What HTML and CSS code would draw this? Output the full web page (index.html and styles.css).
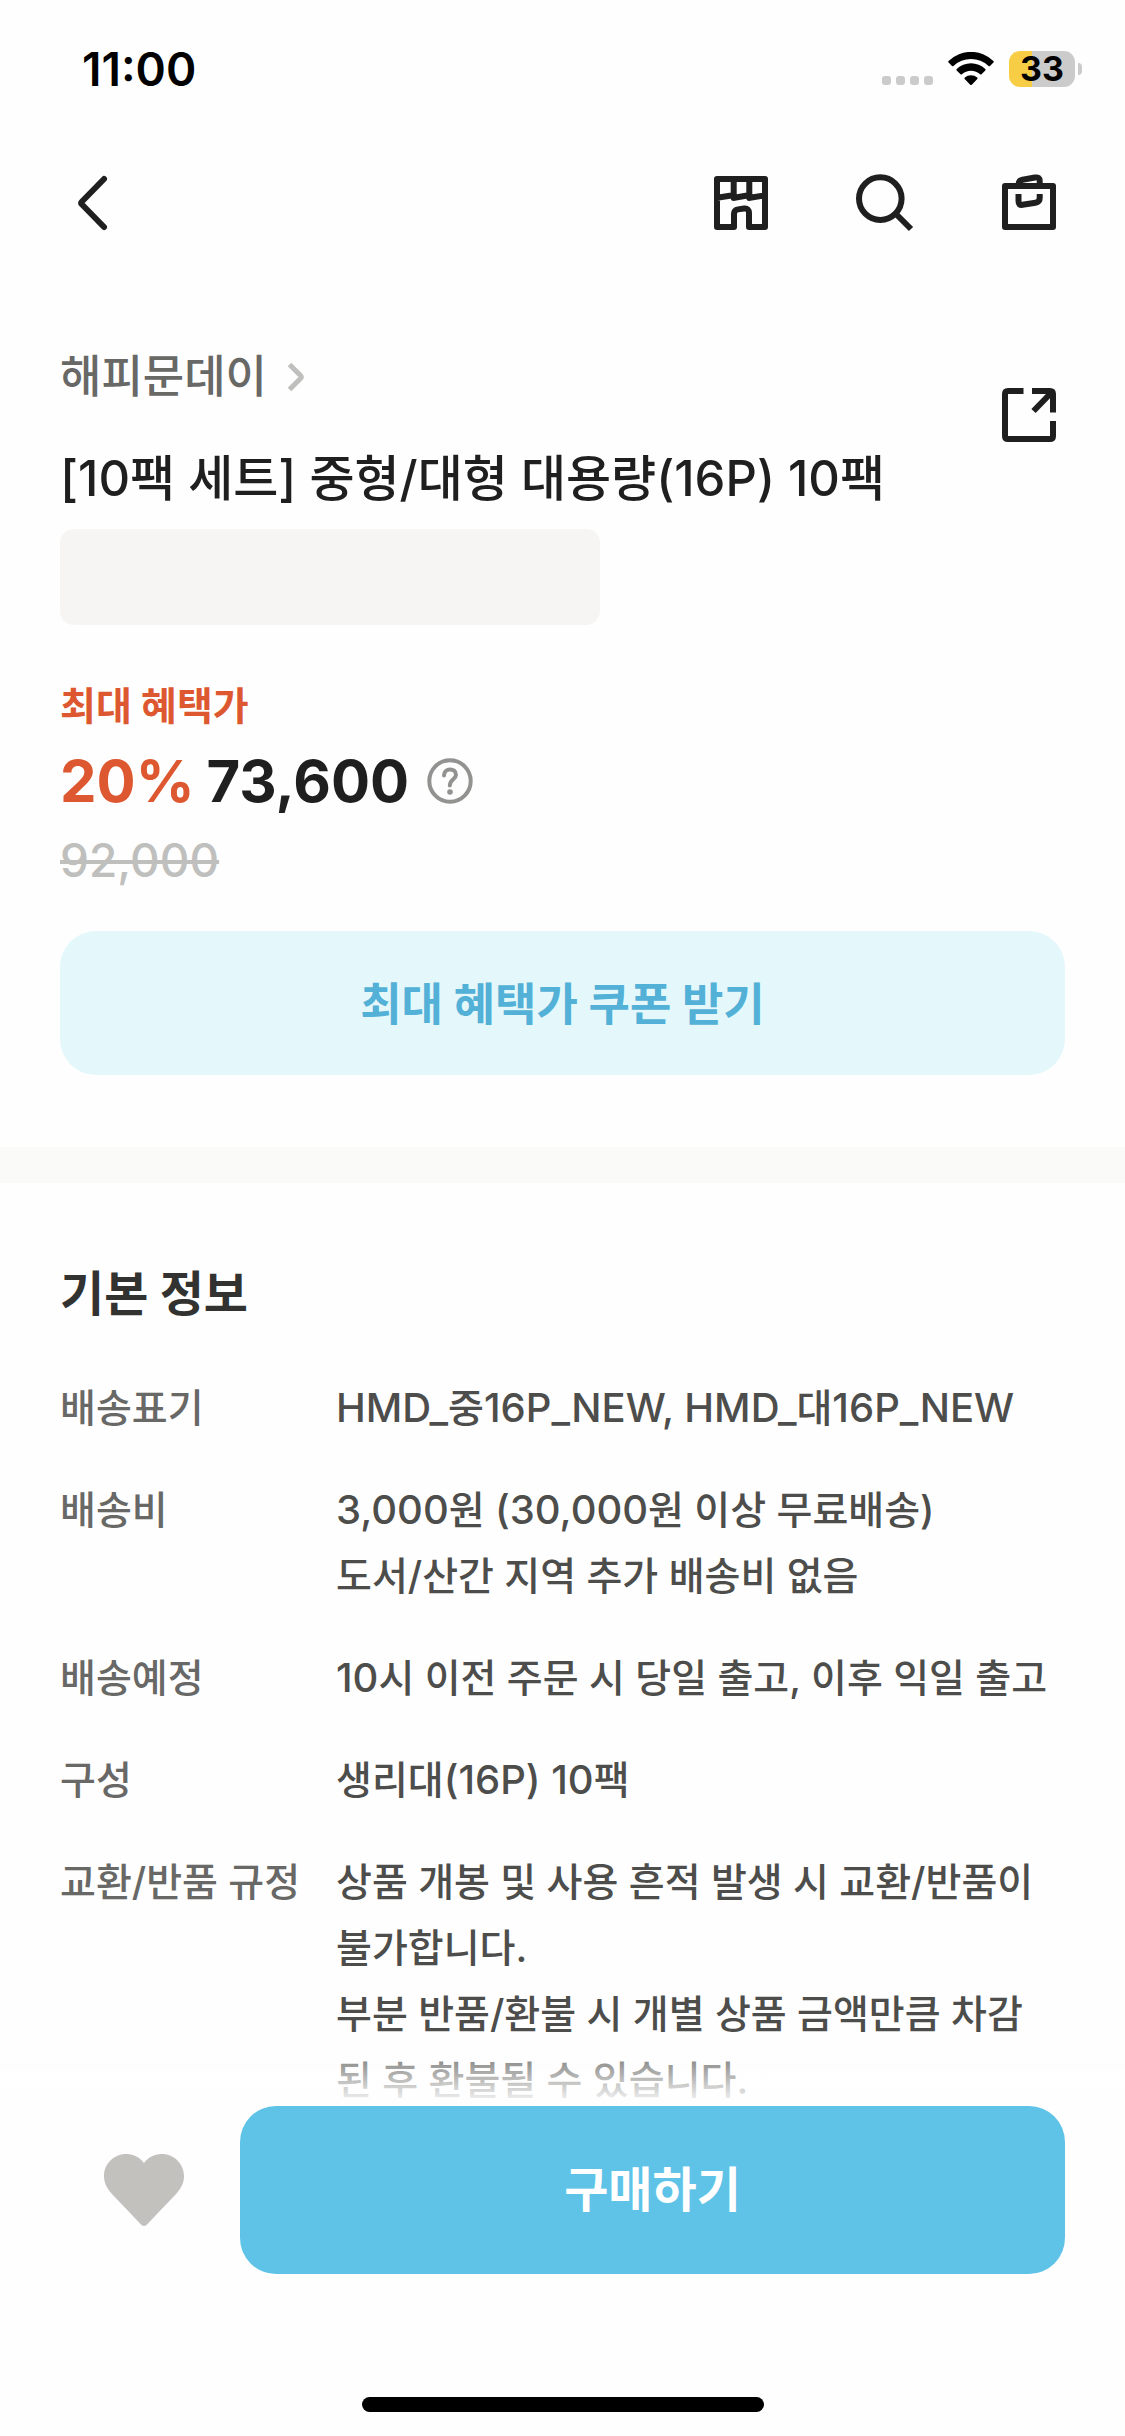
FILE: index.html
```html
<!DOCTYPE html>
<html lang="ko">
<head>
<meta charset="utf-8">
<meta name="viewport" content="width=device-width, initial-scale=1">
<title>[10팩 세트] 중형/대형 대용량(16P) 10팩</title>
<link rel="stylesheet" href="styles.css">
</head>
<body>
<div class="status-bar">
  <span class="status-time">11:00</span>
  <div class="status-icons">
    <span class="signal"><i></i><i></i><i></i><i></i></span>
    <svg class="wifi" viewBox="0 0 46 34" aria-hidden="true">
      <path d="M0.6 10.6Q-.2 9.800.600 9A32 32 0 0 1 45.400 9Q46.200 9.800 45.400 10.600L42 14Q41.300 14.500 40.600 13.900A25.600 25.600 0 0 0 5.400 13.900Q4.700 14.500 4 14Z"/>
      <path d="M8.700 18.600Q8 17.900 8.700 17.100A20.600 20.600 0 0 1 37.300 17.100Q38 17.900 37.300 18.600L33.500 22.300Q32.800 22.900 32.100 22.300A13.500 13.500 0 0 0 13.900 22.300Q13.200 22.900 12.500 22.300Z"/>
      <path d="M16.700 26.900Q16 26.200 16.800 25.500A10 10 0 0 1 29.200 25.500Q30 26.200 29.300 26.900L23.800 32.700Q23 33.400 22.200 32.700Z"/>
    </svg>
    <span class="battery"><span class="battery-level">33</span></span>
  </div>
</div>

<header class="nav">
  <button class="icon-button" type="button" aria-label="뒤로">
    <svg class="icon" viewBox="0 0 72 72"><path d="M47 12L25 34.500Q23.500 36 25 37.500L47 60"/></svg>
  </button>
  <div class="nav-actions">
    <button class="icon-button" type="button" aria-label="스토어">
      <svg class="icon" viewBox="0 0 72 72"><path d="M29 60H12V12H60V60H44V46Q44 41 39 41.600L33 42.400Q29 43 29 47ZM28.700 12V31M44.300 12V31M12 30.800L28 28.300M29.500 30.800L43.500 28.300M45 30.800L60 28.300"/></svg>
    </button>
    <button class="icon-button" type="button" aria-label="검색">
      <svg class="icon" viewBox="0 0 72 72"><circle cx="31.300" cy="31.600" r="21.300"/><path stroke-linecap="butt" d="M46 46L62 62"/></svg>
    </button>
    <button class="icon-button" type="button" aria-label="장바구니">
      <svg class="icon" viewBox="0 0 72 72"><path d="M12 19H60V60H12ZM25.500 19V17.500Q25.500 13.500 29.500 12.700L42 10.500Q46.700 9.800 46.700 14V19"/><path stroke-linecap="butt" d="M25.500 27V34Q25.500 38.500 29.500 37.800L42.500 35.700Q46.700 35 46.700 31V27"/></svg>
    </button>
  </div>
</header>

<main>
  <section class="product">
    <div class="product-head">
      <div class="product-titles">
        <a class="brand" href="#brand">해피문데이
          <svg class="brand-arrow" viewBox="0 0 18 30" aria-hidden="true"><path d="M2.500 2.500L13.500 13.500Q15 15 13.500 16.500L2.500 27.500"/></svg>
        </a>
        <h1 class="title">[10팩 세트] 중형/대형 대용량(16P) 10팩</h1>
      </div>
      <button class="icon-button" type="button" aria-label="공유">
        <svg class="icon icon-share" viewBox="0 0 72 72"><path d="M30.500 12H15Q12 12 12 15V57Q12 60 15 60H57Q60 60 60 57V42M39 12H57Q60 12 60 15V33.500M58 14L40.500 32"/></svg>
      </button>
    </div>
    <div class="placeholder"></div>
    <p class="benefit-label">최대 혜택가</p>
    <div class="price-row">
      <span class="discount">20%</span>
      <strong class="price">73,600</strong>
      <button class="help" type="button" aria-label="혜택가 안내">
        <svg viewBox="0 0 46 46"><circle cx="23" cy="23" r="20.700"/><path d="M17 17.500C17 9.500 29 9.500 29 16.700C29 21.500 22.800 21 22.800 27.500"/><circle class="help-dot" cx="23" cy="34" r="2.800"/></svg>
      </button>
    </div>
    <del class="old-price">92,000</del>
    <button class="coupon" type="button">최대 혜택가 쿠폰 받기</button>
  </section>

  <section class="info">
    <h2 class="info-title">기본 정보</h2>
    <dl class="info-list">
      <dt>배송표기</dt>
      <dd><span class="alnum">HMD_</span>중<span class="alnum">16P_NEW, HMD_</span>대<span class="alnum">16P_NEW</span></dd>
      <dt>배송비</dt>
      <dd><span class="alnum">3,000</span>원 <span class="alnum">(30,000</span>원 이상 무료배송)<br>도서/산간 지역 추가 배송비 없음</dd>
      <dt>배송예정</dt>
      <dd><span class="alnum">10</span>시 이전 주문 시 당일 출고, 이후 익일 출고</dd>
      <dt>구성</dt>
      <dd>생리대<span class="alnum">(16P) 10</span>팩</dd>
      <dt>교환/반품 규정</dt>
      <dd>상품 개봉 및 사용 흔적 발생 시 교환/반품이<br>불가합니다.<br>부분 반품/환불 시 개별 상품 금액만큼 차감<br>된 후 환불될 수 있습니다.</dd>
    </dl>
  </section>
</main>

<footer class="buy-bar">
  <div class="buy-actions">
    <button class="like" type="button" aria-label="찜하기">
      <svg viewBox="0 0 80 72"><path d="M40 9C33 0 25 0 22 0C10 0 0 10 0 22C0 29 3 34 7 39L37.500 71Q40 73 42.500 71L73 39C77 34 80 29 80 22C80 10 70 0 58 0C55 0 47 0 40 9Z"/></svg>
    </button>
    <button class="buy" type="button">구매하기</button>
  </div>
  <div class="home-indicator"></div>
</footer>
</body>
</html>
```
FILE: styles.css
```css
* {
  box-sizing: border-box;
}

body {
  margin: 0;
  background: #fefefe;
  color: #1f1f1f;
  font-family: Inter, "Noto Sans CJK KR", sans-serif;
  font-size: 39px;
  font-weight: 500;
  line-height: 66px;
}

h1, h2, p, dl, dd {
  margin: 0;
}

button {
  padding: 0;
  border: 0;
  background: none;
  color: inherit;
  font: inherit;
  cursor: pointer;
}

svg {
  display: block;
}

/* Status bar */
.status-bar {
  display: flex;
  align-items: center;
  justify-content: space-between;
  height: 138px;
  padding: 0 43px 0 82px;
  color: #000;
}

.status-time {
  font-size: 46px;
  font-weight: 600;
}

.status-icons {
  display: flex;
  align-items: center;
  gap: 15px;
}

.signal {
  display: flex;
  align-self: flex-end;
  gap: 5px;
  padding-bottom: 2px;
}

.signal i {
  width: 9px;
  height: 9px;
  border-radius: 3px;
  background: #cbcbcb;
}

.wifi {
  width: 46px;
  height: 34px;
}

.battery {
  display: flex;
  align-items: center;
  gap: 3px;
}

.battery::after {
  content: "";
  width: 4px;
  height: 12px;
  border-radius: 0 6px 6px 0;
  background: #cbcbcb;
}

.battery-level {
  width: 66px;
  height: 36px;
  border-radius: 11px;
  background: linear-gradient(to right, #f7cd46 35%, #cbcbcb 35%);
  font-size: 34px;
  font-weight: 700;
  line-height: 36px;
  text-align: center;
}

/* Top navigation */
.nav {
  display: flex;
  align-items: center;
  justify-content: space-between;
  height: 132px;
  padding: 0 60px 2px 57px;
}

.nav-actions {
  display: flex;
  gap: 72px;
}

.icon-button {
  flex: none;
  width: 72px;
  height: 72px;
}

.icon {
  width: 72px;
  height: 72px;
  fill: none;
  stroke: #1f1f1f;
  stroke-width: 6;
  stroke-linejoin: round;
  stroke-linecap: round;
}

.icon-share {
  stroke-linecap: butt;
}

/* Product summary */
.product {
  padding: 74px 60px 72px;
  border-bottom: 36px solid #fafaf8;
}

.product-head {
  display: flex;
  align-items: center;
  justify-content: space-between;
}

.product-head .icon-button {
  align-self: flex-start;
  margin-top: 35px;
}

.brand {
  display: flex;
  align-items: center;
  gap: 20px;
  color: #686866;
  font-size: 45px;
  text-decoration: none;
}

.brand-arrow {
  width: 18px;
  height: 30px;
  fill: none;
  stroke: #bfbfbd;
  stroke-width: 5;
}

.title {
  margin-top: 30px;
  font-size: 49px;
  font-weight: 500;
  line-height: 78px;
}

.placeholder {
  width: 540px;
  max-width: 100%;
  height: 96px;
  margin-top: 11px;
  border-radius: 14px;
  background: #f6f5f3;
}

.benefit-label {
  margin-top: 48px;
  color: #dd5830;
  font-weight: 700;
}

.price-row {
  display: flex;
  align-items: center;
  gap: 12px;
  font-size: 58px;
  font-weight: 700;
  line-height: 84px;
}

.discount {
  color: #dd5830;
}

.price {
  font-weight: 700;
}

.help {
  width: 46px;
  height: 46px;
  margin-left: 6px;
}

.help svg {
  fill: none;
  stroke: #929290;
  stroke-width: 4;
  stroke-linecap: round;
}

.help .help-dot {
  fill: #929290;
  stroke: none;
}

.old-price {
  display: block;
  margin-top: 4px;
  color: #bfbfbd;
  font-size: 46px;
}

.coupon {
  width: 100%;
  height: 144px;
  margin-top: 38px;
  padding-top: 4px;
  border-radius: 36px;
  background: #e4f8fc;
  color: #53b0d6;
  font-size: 45px;
  font-weight: 700;
}

/* Basic information */
.info {
  padding: 72px 60px 324px;
}

.info-title {
  color: #323231;
  font-size: 48px;
  font-weight: 700;
  line-height: 78px;
}

.info-list {
  display: grid;
  grid-template-columns: 240px 1fr;
  gap: 36px;
  margin-top: 42px;
}

.info-list dt {
  color: #686866;
  white-space: nowrap;
}

.info-list dd {
  color: #4d4d4b;
}

/* Latin letters and digits run slightly larger beside Hangul */
.alnum {
  font-size: 40px;
}

/* Purchase bar pinned to the bottom of the window */
.buy-bar {
  position: fixed;
  right: 0;
  bottom: 0;
  left: 0;
  padding: 72px 60px 24px;
  background: linear-gradient(to bottom, rgba(254, 254, 254, 0), #fefefe 72px);
}

.buy-actions {
  display: flex;
}

.like {
  display: flex;
  flex: none;
  align-items: center;
  justify-content: center;
  width: 168px;
  height: 168px;
  margin-right: 12px;
}

.like svg {
  width: 80px;
  height: 72px;
  fill: #c2c1be;
}

.buy {
  flex: 1;
  height: 168px;
  border-radius: 36px;
  background: #5fc3e8;
  color: #fff;
  font-size: 48px;
  font-weight: 700;
}

.home-indicator {
  width: 402px;
  max-width: 40%;
  height: 15px;
  margin: 123px auto 0;
  border-radius: 8px;
  background: #000;
}
```
